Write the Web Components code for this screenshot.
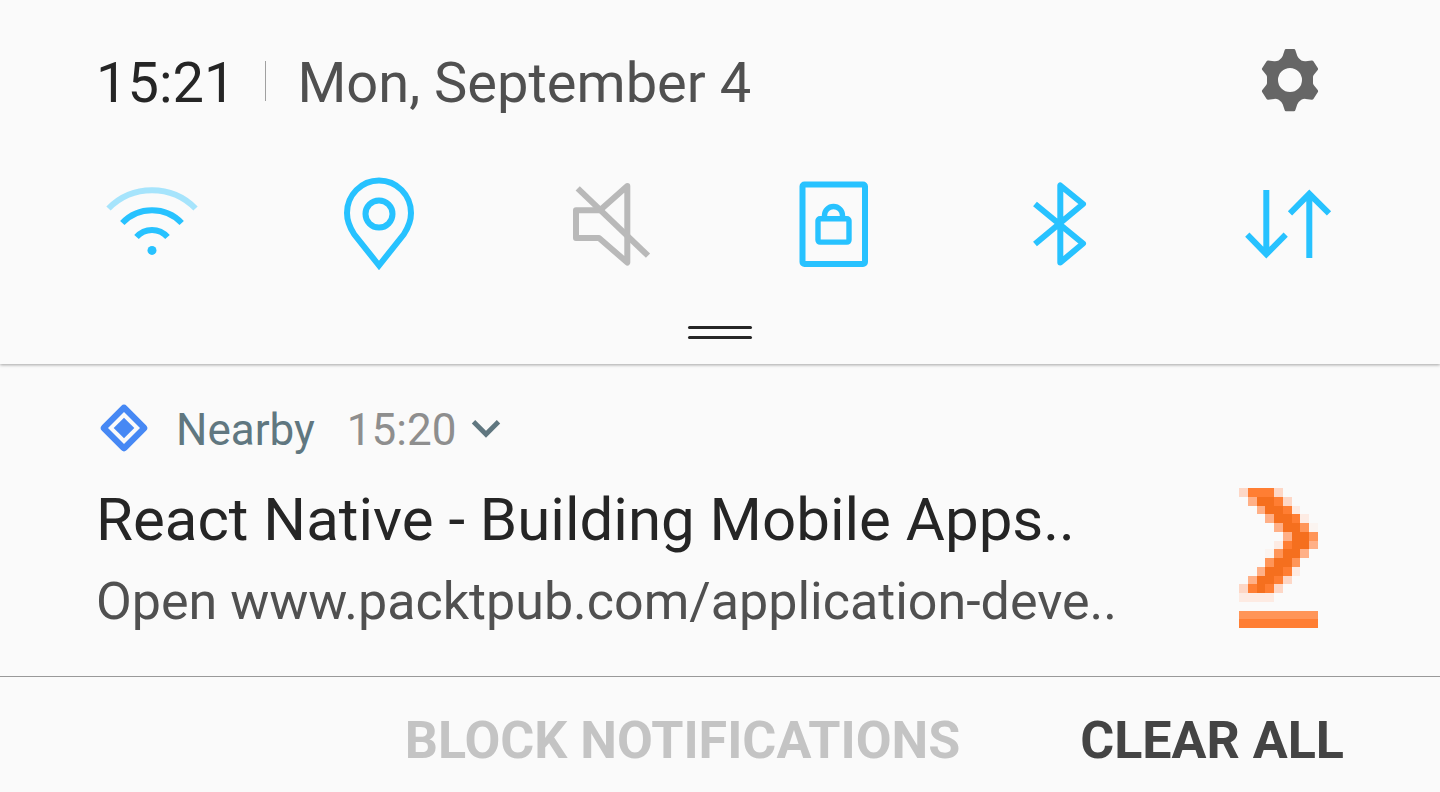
<!DOCTYPE html>
<html lang="en">
<head>
<meta charset="utf-8">
<meta name="viewport" content="width=device-width, initial-scale=1">
<title>Notification shade</title>
<style>
  body { margin: 0; background: #fafafa; font-family: Roboto, "Liberation Sans", sans-serif; }
</style>
</head>
<body>
<notification-shade></notification-shade>
<script>
const define = (name, html, setup) => {
  const template = document.createElement('template');
  template.innerHTML = html;
  customElements.define(name, class extends HTMLElement {
    constructor() {
      super();
      this.attachShadow({ mode: 'open' }).append(template.content.cloneNode(true));
    }
    connectedCallback() { if (setup) setup(this, this.shadowRoot); }
  });
};

const reset = `
  button { display: block; margin: 0; padding: 0; border: 0; background: none; color: inherit; font: inherit; cursor: pointer; }
  svg { display: block; }
`;

/* Clock, date and the settings button */
define('status-header', `
  <style>${reset}
    :host { display: flex; align-items: center; height: 70px; padding: 48px 118px 0 96px; font-size: 56px; line-height: 70px; white-space: nowrap; }
    time { color: #252525; }
    .date { color: #505050; }
    .rule { width: 1px; height: 40px; margin: 13px 31px 0 30px; align-self: flex-start; background: #a0a0a0; }
    button { width: 64px; height: 64px; margin-left: auto; align-self: flex-start; }
  </style>
  <time class="clock"><slot name="clock"></slot></time>
  <span class="rule"></span>
  <time class="date"><slot name="date"></slot></time>
  <button type="button" aria-label="Settings">
    <svg width="64" height="64" viewBox="0 0 64 64"><path fill="#666" fill-rule="evenodd" d="M28 1h8q1 0 1.300 1l2 6q1 2.500 4 4.500q2 1 4.500 .8l6-.8q1-.1 1.600 .8l4.500 7q.5 1-.2 1.800l-4 5q-.7 1-.7 2v6q0 1 .7 2l4 5q.7 1 .2 1.800l-4.500 7q-.6 .9-1.600 .8l-6-.8q-2.500-.2-4.500 .8q-3 2-4 4.500l-2 6q-.3 1-1.300 1h-8q-1 0-1.300-1l-2-6q-1-2.500-4-4.500q-2-1-4.500-.8l-6 .8q-1 .1-1.600-.8l-4.500-7q-.5-1 .2-1.800l4-5q.7-1 .7-2v-6q0-1-.7-2l-4-5q-.7-1-.2-1.800l4.500-7q.6-.9 1.600-.8l6 .8q2.500 .2 4.500-.8q3-2 4-4.500l2-6q.3-1 1.300-1zM32 20a12 12 0 1 0 0 24a12 12 0 1 0 0-24z"/></svg>
  </button>
`);

const tiles = {
  wifi: '<path opacity=".4" d="M6.500 34.500A61 61 0 0 1 93.500 34.500"/><path d="M20.300 49A41 41 0 0 1 79.700 49"/><path d="M34.500 63A20.500 20.500 0 0 1 65.500 63"/><circle cx="50" cy="76.400" r="4.500" fill="currentColor" stroke="none"/>',
  location: '<path d="M50 91.500L25 60C20.500 53 18 46 18 39A32 32.500 0 0 1 82 39C82 46 79.500 53 75 60Z"/><circle cx="50" cy="40" r="13.500"/>',
  mute: '<path stroke-linejoin="round" d="M44 36.300H20V64H43L71.300 88.500V12Z"/><path d="M21.700 14.300L92 81.700"/>',
  rotation: '<rect x="18.500" y="10.500" width="62.500" height="79.500" rx="2"/><g stroke-width="5.400"><rect x="34" y="44.700" width="31" height="23.400" rx="2"/><path d="M40.500 44V41.500A9 9 0 0 1 58.500 41.500V44"/></g>',
  bluetooth: '<path stroke-linejoin="round" d="M24 70L72 30L49.300 11.500V88.500L72 69.500L24 30"/>',
  data: '<path d="M28.300 16V80M9.300 60.700L28.300 80.200L47.700 60.700"/><path d="M71.300 84V20M52 39.300L71.300 19.800L91 39.300"/>'
};

/* One toggle of the quick settings row */
define('quick-tile', `
  <style>${reset}
    :host { display: block; color: #27c2ff; }
    :host([off]) { color: #b9b9b9; }
  </style>
  <button type="button"><svg width="100" height="100" viewBox="0 0 100 100" fill="none" stroke="currentColor" stroke-width="6"></svg></button>
`, (host, root) => {
  root.querySelector('svg').innerHTML = tiles[host.getAttribute('icon')];
  const button = root.querySelector('button');
  button.setAttribute('aria-label', host.getAttribute('label'));
  button.setAttribute('aria-pressed', String(!host.hasAttribute('off')));
});

define('quick-panel', `
  <style>${reset}
    :host { display: block; box-shadow: 0 1px 3px rgba(0,0,0,.35); background: #fafafa; }
    .tiles { display: flex; justify-content: space-between; padding: 56px 102px 52px; }
    .handle { width: 64px; margin: 0 auto; }
    .handle::before, .handle::after { content: ""; display: block; height: 3px; border-radius: 2px; background: #252525; }
    .handle::after { margin-top: 7px; }
    .foot { padding-bottom: 25px; }
  </style>
  <slot name="header"></slot>
  <div class="tiles"><slot></slot></div>
  <div class="foot"><button type="button" class="handle" aria-label="Expand quick settings"></button></div>
`);

/* Pixel artwork: one letter for each cell, nine cells to a row */
const shades = { A: '#f56f1e', B: '#ff7e33', C: '#ff9558', D: '#ffb087', E: '#fdd7c6', F: '#fdebe3', G: '#fbf4f0' };
const cells = [
  'EBBBE....', '.DAABE...', '..DAABF..', '...DAABF.', '....DAACG', '.....DAAC', '....FBAAD', '...GCAAD.',
  '...CAAC..', '..DAABF..', '.DAABE...', 'EBABE....', 'FFFF.....', '.........', 'CCCCCCCCC', 'BBBBBBBBB'
];
define('pixel-logo', `
  <style>${reset} :host { display: block; flex: none; }</style>
  <svg width="79" height="140" viewBox="0 0 9 16" preserveAspectRatio="none" shape-rendering="crispEdges" aria-hidden="true"></svg>
`, (host, root) => {
  root.querySelector('svg').innerHTML = cells.map((row, y) => [...row].map((c, x) =>
    c === '.' ? '' : `<rect x="${x}" y="${y}" width="1" height="1" fill="${shades[c]}"/>`).join('')).join('');
});

define('notification-card', `
  <style>${reset}
    :host { display: flex; justify-content: space-between; padding: 40px 122px 42px 96px; white-space: nowrap; }
    .content { min-width: 0; }
    header { display: flex; height: 52px; font-size: 44px; line-height: 52px; color: #607780; }
    .badge { margin: 0 28px 0 4px; }
    time { margin-left: 32px; color: #8e8e8e; }
    .expand { margin-left: 14px; }
    h2, p { margin: 0; font-weight: 400; }
    h2 { margin-top: 28px; font-size: 60px; line-height: 72px; color: #252525; }
    p { margin-top: 14px; font-size: 52px; line-height: 64px; color: #505050; }
    pixel-logo { margin-top: 84px; }
  </style>
  <div class="content">
    <header>
      <svg class="badge" width="48" height="48" viewBox="0 0 48 48" aria-hidden="true">
        <path fill="#4688f4" stroke="#4688f4" stroke-width="8" stroke-linejoin="round" d="M24 4.800L43.200 24L24 43.200L4.800 24Z"/>
        <path fill="#fafafa" d="M24 8L40 24L24 40L8 24Z"/>
        <path fill="#4688f4" d="M24 13.700L34.300 24L24 34.300L13.700 24Z"/>
      </svg>
      <slot name="app"></slot>
      <time><slot name="time"></slot></time>
      <button type="button" class="expand" aria-label="Expand notification">
        <svg width="32" height="52" viewBox="0 0 32 52" fill="none" stroke="#607780" stroke-width="4.800"><path d="M3.500 17.800L16 30.300L28.500 17.800"/></svg>
      </button>
    </header>
    <h2><slot name="title"></slot></h2>
    <p><slot></slot></p>
  </div>
  <pixel-logo></pixel-logo>
`);

define('shade-actions', `
  <style>${reset}
    :host { display: flex; justify-content: flex-end; gap: 120px; padding: 32px 96px 19px; border-top: 1px solid #999; font-size: 52px; font-weight: 700; line-height: 64px; white-space: nowrap; color: #444; }
    button:disabled { color: #c4c4c4; cursor: default; }
  </style>
  <button type="button" disabled>BLOCK NOTIFICATIONS</button>
  <button type="button">CLEAR ALL</button>
`);

define('notification-shade', `
  <style>:host { display: block; }</style>
  <quick-panel>
    <status-header slot="header"><span slot="clock">15:21</span><span slot="date">Mon, September 4</span></status-header>
    <quick-tile icon="wifi" label="Wi-Fi"></quick-tile>
    <quick-tile icon="location" label="Location"></quick-tile>
    <quick-tile icon="mute" label="Sound" off></quick-tile>
    <quick-tile icon="rotation" label="Portrait lock"></quick-tile>
    <quick-tile icon="bluetooth" label="Bluetooth"></quick-tile>
    <quick-tile icon="data" label="Mobile data"></quick-tile>
  </quick-panel>
  <notification-card>
    <span slot="app">Nearby</span><span slot="time">15:20</span>
    <span slot="title">React Native - Building Mobile Apps..</span>
    Open www.packtpub.com/application-deve..
  </notification-card>
  <shade-actions></shade-actions>
`);
</script>
</body>
</html>
